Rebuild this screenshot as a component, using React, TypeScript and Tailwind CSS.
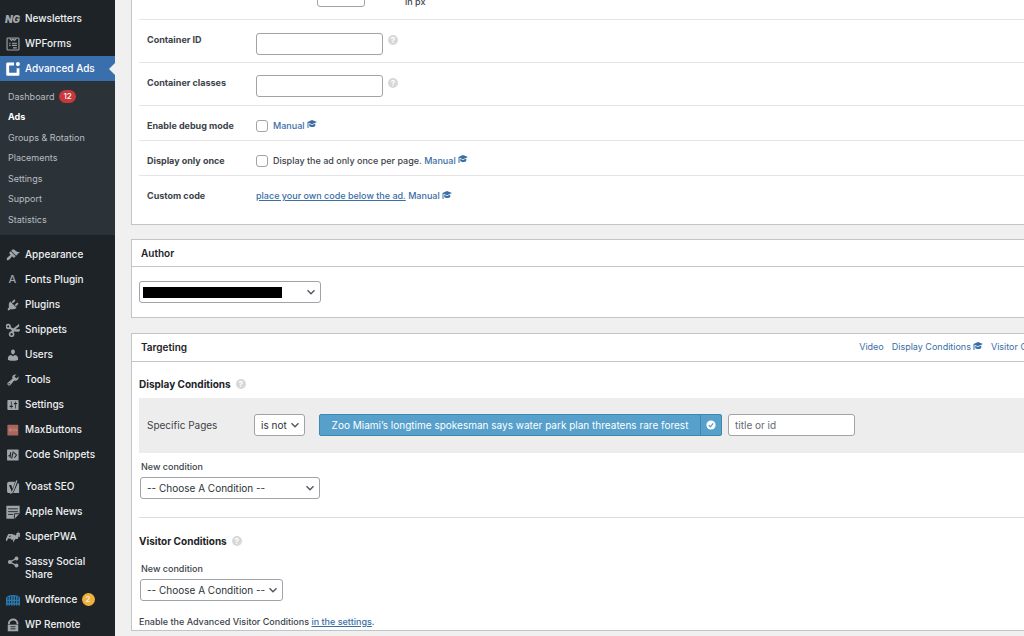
import React from 'react';

type IconName =
  | 'ng' | 'forms' | 'ads' | 'appearance' | 'fonts' | 'plugins' | 'snippets' | 'users' | 'tools'
  | 'settings' | 'maxbuttons' | 'code' | 'yoast' | 'news' | 'pwa' | 'share' | 'wordfence' | 'remote';

interface MenuEntry {
  label: string;
  icon: IconName;
  badge?: string;
}

const topMenu: MenuEntry[] = [
  { label: 'Newsletters', icon: 'ng' },
  { label: 'WPForms', icon: 'forms' },
];

const adsSubmenu = ['Dashboard', 'Ads', 'Groups & Rotation', 'Placements', 'Settings', 'Support', 'Statistics'];

const coreMenu: MenuEntry[] = [
  { label: 'Appearance', icon: 'appearance' },
  { label: 'Fonts Plugin', icon: 'fonts' },
  { label: 'Plugins', icon: 'plugins' },
  { label: 'Snippets', icon: 'snippets' },
  { label: 'Users', icon: 'users' },
  { label: 'Tools', icon: 'tools' },
  { label: 'Settings', icon: 'settings' },
  { label: 'MaxButtons', icon: 'maxbuttons' },
  { label: 'Code Snippets', icon: 'code' },
];

const pluginMenu: MenuEntry[] = [
  { label: 'Yoast SEO', icon: 'yoast' },
  { label: 'Apple News', icon: 'news' },
  { label: 'SuperPWA', icon: 'pwa' },
  { label: 'Sassy Social Share', icon: 'share' },
  { label: 'Wordfence', icon: 'wordfence', badge: '2' },
  { label: 'WP Remote', icon: 'remote' },
];

// All icons share a 20x20 grid
const iconShapes: Record<Exclude<IconName, 'ng' | 'fonts'>, React.ReactNode> = {
  forms: (
    <g fill="none" stroke="currentColor" strokeWidth={1.6}>
      <rect x="1.500" y="1.500" width="17" height="17" rx="1" />
      <path d="M5 2l3 3 2-2 2 2 3-3M4.500 9h2M8.500 9h7M4.500 12h2M8.500 12h7M10 15.500h5.500" />
    </g>
  ),
  ads: (
    <>
      <path d="M11.500 .8H2.500A2 2 0 0 0 .3 3v14.500a2 2 0 0 0 2.200 2.200H17a2 2 0 0 0 2.200-2.200V9h-4v6.500H4.500V5h7z" />
      <circle cx="17" cy="3" r="2.900" />
    </>
  ),
  appearance: (
    <path d="M14.480 11.060L7.410 3.990l1.500-1.500c.5-.56 2.300-.47 3.510.32 1.210.8 1.430 1.280 2.910 2.100 1.180.64 2.450 1.260 4.450.85zm-.71.71L6.700 4.700 4.930 6.470c-.39.39-.39 1.020 0 1.410l1.060 1.060c.39.39.39 1.030 0 1.420-.6.6-1.430 1.110-2.210 1.690-.35.26-.7.53-1.010.84C1.430 14.230.4 16.080 1.400 17.070c.99 1 2.840-.03 4.180-1.360.31-.31.58-.66.85-1.020.57-.78 1.080-1.610 1.690-2.210.39-.39 1.020-.39 1.410 0l1.060 1.060c.39.39 1.020.39 1.410 0z" />
  ),
  plugins: (
    <path d="M13.110 4.360L9.870 7.600 8 5.730l3.240-3.240c.35-.34 1.050-.2 1.560.32.52.51.66 1.210.31 1.550zm-8 1.770l.91-1.120 9.010 9.010-1.190.84c-.71.71-2.630 1.160-3.820 1.160H6.140L4.900 17.260c-.59.59-1.540.59-2.120 0-.59-.58-.59-1.530 0-2.120l1.240-1.240v-3.880c0-1.130.4-3.190 1.090-3.890zm7.260 3.970l3.240-3.240c.34-.35 1.040-.21 1.550.31.52.51.66 1.210.31 1.550l-3.240 3.250z" />
  ),
  snippets: (
    <>
      <g fill="none" stroke="currentColor" strokeWidth={2.400}>
        <circle cx="3.200" cy="5" r="2.700" />
        <circle cx="8" cy="16" r="2.900" />
      </g>
      <path d="M5 5l5.500 2.800L18.500 1.500c1 1.800.5 3.200-.8 4.200L13.500 9l6.500 0c.2 2-1 3.400-3 3.400L11.500 12l-1.700 3-2.500-1.500 1-3L4.500 8z" />
    </>
  ),
  users: (
    <path d="M10 9.250c-2.270 0-2.730-3.440-2.730-3.440C7 4.020 7.820 2 9.970 2c2.160 0 2.980 2.020 2.710 3.810 0 0-.41 3.440-2.680 3.440zm0 2.570L12.720 10c2.390 0 4.520 2.330 4.520 4.530v2.490s-3.650 1.130-7.240 1.130c-3.650 0-7.240-1.130-7.240-1.130v-2.490c0-2.250 1.940-4.480 4.470-4.480z" />
  ),
  tools: (
    <path d="M16.680 9.770c-1.340 1.340-3.300 1.670-4.950.99l-5.410 6.520c-.99.99-2.590.99-3.580 0s-.99-2.590 0-3.570l6.520-5.420c-.68-1.650-.35-3.610.99-4.950 1.280-1.280 3.120-1.620 4.720-1.060l-2.890 2.890 2.820 2.820 2.860-2.870c.53 1.580.18 3.390-1.080 4.650zM3.810 16.210c.4.39 1.040.39 1.430 0 .4-.4.4-1.040 0-1.430-.39-.4-1.030-.4-1.430 0-.39.39-.39 1.030 0 1.430z" />
  ),
  settings: (
    <path d="M18 16V4c0-.55-.45-1-1-1H3c-.55 0-1 .45-1 1v12c0 .55.45 1 1 1h14c.55 0 1-.45 1-1zM8 11h1c.55 0 1 .45 1 1s-.45 1-1 1H8v1.500c0 .28-.22.5-.5.5s-.5-.22-.5-.5V13H6c-.55 0-1-.45-1-1s.45-1 1-1h1V5.500c0-.28.22-.5.5-.5s.5.22.5.5V11zm5-2h-1c-.55 0-1-.45-1-1s.45-1 1-1h1V5.500c0-.28.22-.5.5-.5s.5.22.5.5V7h1c.55 0 1 .45 1 1s-.45 1-1 1h-1v5.500c0 .28-.22.5-.5.5s-.5-.22-.5-.5V9z" />
  ),
  maxbuttons: (
    <>
      <rect x="2" y="2.500" width="15.500" height="15.500" rx="1" fill="#a8665c" />
      <path d="M4.500 12V8.500h2V12V8.500h2V12M11 12V8.500h2V12M15 8.500V12" fill="none" stroke="#c98d84" strokeWidth={1} />
    </>
  ),
  code: (
    <>
      <rect x="1.500" y="2" width="16.500" height="16" rx="1" />
      <path d="M6.500 6v3.500L4.500 11H6v3M10.500 5l-2.500 10M11.500 6.500l3.500 3.500-3 4" fill="none" stroke="#1d2327" strokeWidth={1.500} />
    </>
  ),
  yoast: (
    <>
      <path d="M4.500 2.500H13L9.500 12.500 7.500 7H4.300l3.900 9.500c-.5 1.200-1.200 2-2.500 2H3.500A2 2 0 0 1 1.500 16.500V5.500a3 3 0 0 1 3-3zM17 4.200c1.200.5 1.700 1.400 1.700 2.500v11.800h-8.500c1-1 1.500-2.300 2-3.600z" />
      <path d="M15.500 .8l-5.200 13.700c-1 2.700-2 4.300-4.300 4.500" fill="none" stroke="currentColor" strokeWidth={2} />
    </>
  ),
  news: (
    <>
      <path d="M.5 1h19v11l-7 7.500H.5z" />
      <path d="M3 5.500h14M3 9.500h14M3 13.500h7M12 19.500v-7h7.500" fill="none" stroke="#1d2327" strokeWidth={1.300} />
    </>
  ),
  pwa: (
    <g fill="none" stroke="currentColor" strokeWidth={2.600}>
      <path d="M0 15.500L4 7h3.500c2 0 1 4-1.500 4H3M9 6l-1 7.500L12 7l-.5 6.500L16.500 6v5M14 11.500h3M15 5.500h5M18 8.500h2" />
    </g>
  ),
  share: (
    <>
      <path d="M15 5L5.500 10l9.500 5" fill="none" stroke="currentColor" strokeWidth={2} />
      <circle cx="15" cy="5" r="2.700" />
      <circle cx="5.500" cy="10" r="2.700" />
      <circle cx="15" cy="15" r="2.700" />
    </>
  ),
  wordfence: (
    <g fill="none" stroke="#2a79b0" strokeWidth={2.300}>
      <path d="M1.200 18V6.500M4.800 18V4.500M8.300 18V3.500M11.700 18V3.500M15.200 18V4.500M18.800 18V6.500" />
      <path d="M0 7.500C4 2.500 16 2.500 20 7.500M0 10.500h20M0 15.500h20" strokeWidth={1.500} />
    </g>
  ),
  remote: (
    <>
      <path d="M4 9c0-9 12.500-9 12.500 0" fill="none" stroke="currentColor" strokeWidth={2.800} />
      <path d="M2.500 9.500h15V19h-15z" />
      <path d="M6.500 12.500h7M6.500 15.500h7" fill="none" stroke="#1d2327" strokeWidth={1.300} />
    </>
  ),
};

const MenuIcon = ({ name }: { name: IconName }) => {
  if (name === 'ng') {
    return <span className="text-[10px] leading-none font-black italic">NG</span>;
  }
  if (name === 'fonts') {
    return <span className="text-[11px] leading-none">A</span>;
  }
  return (
    <svg className="h-[14px] w-[14px]" viewBox="0 0 20 20" fill="currentColor" aria-hidden="true">
      {iconShapes[name]}
    </svg>
  );
};

const MenuItem = ({ label, icon, badge, active = false }: MenuEntry & { active?: boolean }) => (
  <li>
    <a
      href="#"
      className={`relative flex py-[6px] pr-4 leading-[13px] ${active ? 'bg-[#3a6fad] text-white' : 'text-[#f0f0f1]'}`}
    >
      <span className={`flex h-[13px] w-[25px] shrink-0 items-center justify-center ${active ? 'text-white' : 'text-[#a0a5aa]'}`}>
        <MenuIcon name={icon} />
      </span>
      <span>{label}</span>
      {badge && (
        <span className="ml-1 flex h-[13px] w-[13px] shrink-0 items-center justify-center rounded-full bg-[#efb03c] text-[8px]">
          {badge}
        </span>
      )}
      {active && (
        <span className="absolute top-[7px] right-0 border-y-[6px] border-r-[6px] border-y-transparent border-r-[#f0f0f1]" />
      )}
    </a>
  </li>
);

const Sidebar = () => (
  <nav className="w-[115px] shrink-0 bg-[#1d2327] pt-[6px] text-[10px] font-medium">
    <ul>
      {topMenu.map(item => <MenuItem key={item.label} {...item} />)}
      <MenuItem label="Advanced Ads" icon="ads" active />
    </ul>
    <ul className="flex h-[154px] flex-col bg-[#2c3338] py-[5px] text-[9px] font-normal">
      {adsSubmenu.map(label => (
        <li key={label} className="flex flex-1 items-center pl-2">
          <a href="#" className={label === 'Ads' ? 'font-bold text-white' : 'text-[#b9bdc1]'}>{label}</a>
          {label === 'Dashboard' && (
            <span className="ml-[5px] rounded-full bg-[#c9383a] px-1 text-[8px] leading-[13px] font-medium text-white">12</span>
          )}
        </li>
      ))}
    </ul>
    <ul className="pt-[7px]">
      {coreMenu.map(item => <MenuItem key={item.label} {...item} />)}
    </ul>
    <ul className="pt-[7px]">
      {pluginMenu.map(item => <MenuItem key={item.label} {...item} />)}
    </ul>
  </nav>
);

const CapIcon = () => (
  <svg className="mb-1 ml-[2px] inline h-[10px] w-[10px]" viewBox="0 0 20 20" fill="currentColor" aria-hidden="true">
    <path d="M10 2l10 4-10 4.500L3 7.500V18H1V6z" />
    <path d="M4.500 9.500l5.500 2.300 6.500-2.800v5c-2.500 2.500-9.500 2.500-12 0z" />
  </svg>
);

const ManualLink = () => (
  <a href="#" className="text-[#3a6ea5]">Manual<CapIcon /></a>
);

const HelpIcon = () => (
  <span className="flex h-[10px] w-[10px] shrink-0 items-center justify-center rounded-full bg-[#d8d8d8] text-[8px] leading-none font-bold text-white">
    ?
  </span>
);

interface SelectProps {
  id: string;
  label: string;
  value: string;
  className: string;
}

const Select = ({ id, label, value, className }: SelectProps) => (
  <span className={`relative block ${className}`}>
    <select
      id={id}
      aria-label={label}
      className="h-[22px] w-full appearance-none rounded-[3px] border border-[#a0a3a7] bg-white pl-[6px] text-[10px] text-[#2c3338]"
    >
      <option>{value}</option>
    </select>
    <svg className="pointer-events-none absolute top-[7px] right-[6px] h-2 w-2" viewBox="0 0 8 8" fill="none" stroke="#50575e" strokeWidth={1.4} aria-hidden="true">
      <path d="M.5 2.200L4 5.700l3.500-3.500" />
    </svg>
  </span>
);

interface OptionRowProps {
  label: string;
  htmlFor?: string;
  className: string;
  children: React.ReactNode;
}

const OptionRow = ({ label, htmlFor, className, children }: OptionRowProps) => (
  <div className={`flex ${className}`}>
    <label htmlFor={htmlFor} className="w-[117px] shrink-0 pt-[13px] pl-2 font-bold text-[#3c434a]">{label}</label>
    {children}
  </div>
);

const inputClass = 'h-[22px] w-[127px] rounded-[3px] border border-[#a0a3a7] bg-white px-[6px] text-[10px] placeholder:text-[#646970]';
const checkboxClass = 'mr-[5px] h-3 w-3 shrink-0 appearance-none rounded-[3px] border border-[#a0a3a7] bg-white';

const OptionsPanel = () => (
  <section className="border border-t-0 border-[#c3c4c7] bg-white pl-[7px] leading-[13px] font-medium">
    <div className="flex h-5 items-start overflow-hidden border-b border-[#e4e4e6]">
      <input aria-label="Margin" className="-mt-[15px] ml-[178px] h-[22px] w-[48px] rounded-[3px] border border-[#a0a3a7] bg-white" />
      <span className="-mt-[5px] ml-10 text-[#3c434a]">in px</span>
    </div>
    <OptionRow label="Container ID" htmlFor="container-id" className="h-[43px] border-b border-[#e4e4e6]">
      <input id="container-id" className={`mt-[13px] ${inputClass}`} />
      <span className="mt-[15px] ml-[5px]"><HelpIcon /></span>
    </OptionRow>
    <OptionRow label="Container classes" htmlFor="container-classes" className="h-[43px] border-b border-[#e4e4e6]">
      <input id="container-classes" className={`mt-[12px] ${inputClass}`} />
      <span className="mt-[15px] ml-[5px]"><HelpIcon /></span>
    </OptionRow>
    <OptionRow label="Enable debug mode" htmlFor="debug-mode" className="h-[35px] border-b border-[#e4e4e6]">
      <div className="flex items-center pt-[6px]">
        <input id="debug-mode" type="checkbox" className={checkboxClass} />
        <ManualLink />
      </div>
    </OptionRow>
    <OptionRow label="Display only once" htmlFor="display-once" className="h-[35px] border-b border-[#e4e4e6]">
      <div className="flex items-center pt-[6px]">
        <input id="display-once" type="checkbox" className={checkboxClass} />
        <span className="text-[#3c434a]">Display the ad only once per page. <ManualLink /></span>
      </div>
    </OptionRow>
    <OptionRow label="Custom code" className="h-[48px]">
      <p className="pt-[13px]">
        <a href="#" className="text-[#3a6ea5] underline">place your own code below the ad.</a> <ManualLink />
      </p>
    </OptionRow>
  </section>
);

const AuthorPanel = () => (
  <section className="mt-[14px] border border-[#c3c4c7] bg-white">
    <h2 className="border-b border-[#c3c4c7] px-[9px] py-[6px] text-[10px] leading-[14px] font-semibold text-[#1d2327]">Author</h2>
    <div className="relative py-[14px] pl-[7px]">
      <Select id="author" label="Author" value="" className="w-[182px]" />
      {/* Hidden author name */}
      <span className="absolute top-[20px] left-[11px] h-[11px] w-[139px] bg-black" />
    </div>
  </section>
);

const TargetingPanel = () => (
  <section className="mt-[15px] border border-[#c3c4c7] bg-white pb-[1px]">
    <header className="flex items-center border-b border-[#c3c4c7] px-[9px] py-[6px] leading-[14px]">
      <h2 className="flex-1 text-[10px] font-semibold text-[#1d2327]">Targeting</h2>
      <div className="flex gap-2 text-[9px] whitespace-nowrap text-[#3a6ea5]">
        <a href="#">Video</a>
        <a href="#">Display Conditions<CapIcon /></a>
        <a href="#">Visitor Conditions<CapIcon /></a>
      </div>
    </header>
    <div className="pl-[7px] leading-[14px] text-[#3c434a]">
      <h3 className="flex items-center gap-[5px] pt-[15px] pb-[7px] text-[10px] font-bold text-[#1d2327]">
        Display Conditions <HelpIcon />
      </h3>
      <div className="flex h-[55px] items-center bg-[#ededed] pl-2 text-[10px]">
        <span className="w-[107px] shrink-0">Specific Pages</span>
        <Select id="page-operator" label="Operator" value="is not" className="w-[51px]" />
        <div className="ml-[14px] flex h-[22px] shrink-0 rounded-[2px] border border-[#3f86b0] bg-[#57a0cc] text-white">
          <span className="flex w-[381px] items-center justify-center border-r border-[#3f86b0] whitespace-nowrap">
            Zoo Miami’s longtime spokesman says water park plan threatens rare forest
          </span>
          <button type="button" aria-label="Remove page" className="flex w-5 items-center justify-center">
            <svg className="h-[10px] w-[10px]" viewBox="0 0 10 10" aria-hidden="true">
              <circle cx="5" cy="5" r="4.600" fill="white" />
              <path d="M2.800 5.200l1.600 1.600 2.800-3.400" fill="none" stroke="#57a0cc" strokeWidth={1.300} />
            </svg>
          </button>
        </div>
        <input aria-label="title or id" placeholder="title or id" className={`ml-[6px] ${inputClass}`} />
      </div>
      <label htmlFor="display-condition" className="block pt-[7px] pb-[3px] pl-[2px] text-[9px] font-medium">New condition</label>
      <Select id="display-condition" label="New condition" value="-- Choose A Condition --" className="ml-px w-[180px]" />
      <hr className="mt-[18px] border-[#dcdcde]" />
      <h3 className="flex items-center gap-[5px] pt-[16px] pb-[14px] text-[10px] font-bold text-[#1d2327]">
        Visitor Conditions <HelpIcon />
      </h3>
      <label htmlFor="visitor-condition" className="block pb-[3px] pl-[2px] text-[9px] font-medium">New condition</label>
      <Select id="visitor-condition" label="New condition" value="-- Choose A Condition --" className="ml-px w-[143px]" />
      <p className="pt-[14px] text-[9px] font-medium">
        Enable the Advanced Visitor Conditions <a href="#" className="text-[#3a6ea5] underline">in the settings</a>.
      </p>
    </div>
  </section>
);

const App: React.FC = () => (
  <div className="flex min-h-screen bg-[#f0f0f1] font-['Inter',sans-serif]">
    <Sidebar />
    <main className="min-w-0 flex-1 overflow-hidden pl-4 text-[9px]">
      {/* The meta boxes run past the right edge of the window */}
      <div className="-mr-[64px]">
        <OptionsPanel />
        <AuthorPanel />
        <TargetingPanel />
      </div>
    </main>
  </div>
);

export default App;
